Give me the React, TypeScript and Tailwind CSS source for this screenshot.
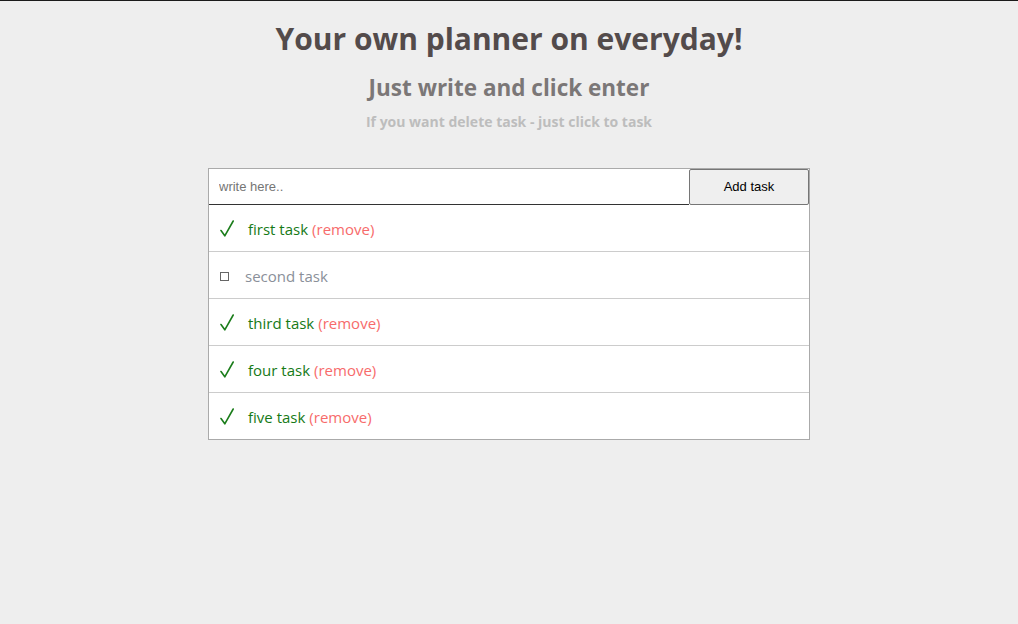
import React from "react";

const tasks = [
  { text: "first task", done: true },
  { text: "second task", done: false },
  { text: "third task", done: true },
  { text: "four task", done: true },
  { text: "five task", done: true },
];

function Check() {
  return (
    <svg width="14" height="17" viewBox="0 0 14 17" className="block">
      <path d="M1 10.5 L4.8 15.8 L13.2 1" fill="none" stroke="#1b7d1b" strokeWidth="1.6" strokeLinecap="round" strokeLinejoin="round" />
    </svg>
  );
}

export default function App() {
  return (
    <div className="min-h-[624px] bg-[#eeeeee] border-t border-[#1a1a1a]" style={{ fontFamily: '"Open Sans", "Noto Sans", sans-serif' }}>
      <div className="flex flex-col items-center">
        <h1 className="mt-[18px] text-[30px] leading-[40px] font-bold text-[#534b4b]">Your own planner on everyday!</h1>
        <h2 className="mt-[14px] text-[22.5px] leading-[30px] font-bold text-[#7b7777]">Just write and click enter</h2>
        <p className="mt-[9px] text-[14px] leading-[20px] font-bold text-[#bdbdbd]">If you want delete task - just click to task</p>
      </div>
      <div className="mx-auto mt-[36px] w-[602px] border border-[#aaaaaa] bg-white">
        <div className="flex h-[36px]">
          <input
            placeholder="write here.."
            className="flex-1 min-w-0 border-b border-[#333333] px-[10px] text-[13px] text-[#333] placeholder:text-[#757575] outline-none"
            style={{ fontFamily: '"Liberation Sans", Arial, sans-serif' }}
          />
          <button
            className="w-[120px] h-[36px] rounded-[2px] border border-[#767676] bg-[#efefef] text-[13px] text-black"
            style={{ fontFamily: '"Liberation Sans", Arial, sans-serif' }}
          >
            Add task
          </button>
        </div>
        {tasks.map((t, i) => (
          <div
            key={i}
            className={`flex items-center px-[10px] pt-[3px] text-[15px] ${i < tasks.length - 1 ? "h-[47px] border-b border-[#cccccc]" : "h-[46px]"}`}
          >
            {t.done ? (
              <>
                <span className="w-[29px] pl-[1px] -mt-[2px]">
                  <Check />
                </span>
                <span className="text-[#167a16]">{t.text}</span>
                <span className="ml-[4px] text-[#f76b6b]">(remove)</span>
              </>
            ) : (
              <>
                <span className="w-[26px] pl-[1px]">
                  <span className="block w-[9px] h-[9px] border border-[#666666]" />
                </span>
                <span className="text-[#8a8f99]">{t.text}</span>
              </>
            )}
          </div>
        ))}
      </div>
    </div>
  );
}
